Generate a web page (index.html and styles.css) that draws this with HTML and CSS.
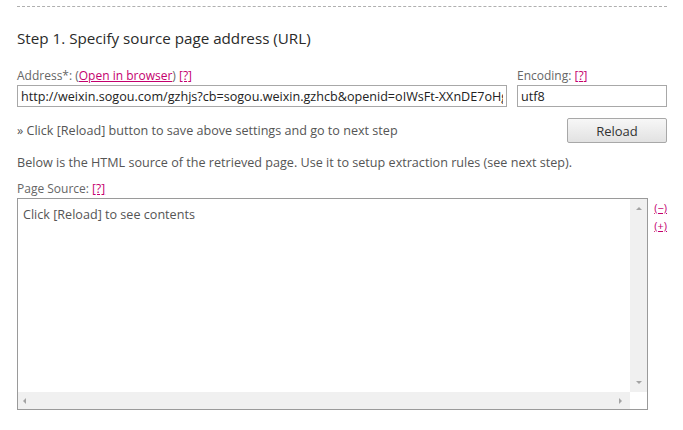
FILE: index.html
```html
<!DOCTYPE html>
<html>
<head>
<meta charset="utf-8">
<link rel="stylesheet" href="styles.css">
</head>
<body>
<div class="page">
  <div class="divider"></div>
  <h2 class="step-title">Step 1. Specify source page address (URL)</h2>
  <div class="url-row">
    <div class="field">
      <div class="label">Address*: (<a href="#">Open in browser</a>) <a href="#">[?]</a></div>
      <input class="text-input" type="text" value="http://weixin.sogou.com/gzhjs?cb=sogou.weixin.gzhcb&amp;openid=oIWsFt-XXnDE7oHgqY0wU2sCsK2k">
    </div>
    <div class="field">
      <div class="label">Encoding: <a href="#">[?]</a></div>
      <input class="text-input" type="text" value="utf8">
    </div>
  </div>
  <div class="reload-row">
    <span class="hint">» Click [Reload] button to save above settings and go to next step</span>
    <button class="btn">Reload</button>
  </div>
  <p class="info">Below is the HTML source of the retrieved page. Use it to setup extraction rules (see next step).</p>
  <div class="label src-label">Page Source: <a href="#">[?]</a></div>
  <div class="source-row">
    <div class="source-box">
      <div class="source-main">
        <div class="source-text">Click [Reload] to see contents</div>
        <div class="vscroll">
          <span class="arrow up"></span>
          <span class="arrow down"></span>
        </div>
      </div>
      <div class="hscroll-row">
        <div class="hscroll">
          <span class="arrow left"></span>
          <span class="arrow right"></span>
        </div>
        <div class="corner"></div>
      </div>
    </div>
    <div class="resize-links">
      <a href="#">(&minus;)</a>
      <a href="#">(+)</a>
    </div>
  </div>
</div>
</body>
</html>
```

FILE: styles.css
```css
html, body {
  margin: 0;
  padding: 0;
  background: #fff;
}
body {
  font-family: "Open Sans", "Noto Sans", sans-serif;
  font-size: 12.6px;
  color: #555;
}
.page {
  padding: 6px 16px 0 17px;
}
.divider {
  border-top: 1px dashed #b0b0b0;
}
.step-title {
  margin: 21px 0 0;
  font-size: 15.2px;
  line-height: 20px;
  font-weight: normal;
  color: #2a2a2a;
}
a {
  color: #c4006e;
  text-decoration: underline;
}
.url-row {
  display: grid;
  grid-template-columns: 1fr 150px;
  column-gap: 10px;
  margin-top: 20px;
}
.label {
  font-size: 12px;
  line-height: 16px;
  height: 16px;
  color: #666;
}
.text-input {
  display: block;
  box-sizing: border-box;
  width: 100%;
  height: 22px;
  margin-top: 1px;
  border: 1px solid #a8a8a8;
  padding: 0 3px;
  font-family: "Open Sans", "Noto Sans", sans-serif;
  font-size: 12.6px;
  color: #222;
  outline: none;
}
.reload-row {
  display: flex;
  justify-content: space-between;
  align-items: center;
  margin-top: 11px;
}
.hint {
  color: #555;
}
.btn {
  width: 100px;
  height: 25px;
  border: 1px solid #a8a8a8;
  border-radius: 2px;
  background: linear-gradient(#f7f7f7, #e2e2e2);
  font-family: "Open Sans", "Noto Sans", sans-serif;
  font-size: 13px;
  color: #333;
  padding: 0;
}
.info {
  margin: 11px 0 0;
  line-height: 17px;
}
.src-label {
  margin-top: 10px;
}
.source-row {
  display: flex;
  align-items: flex-start;
  margin-top: 1px;
}
.source-box {
  width: 633px;
  height: 212px;
  box-sizing: border-box;
  border: 1px solid #9a9a9a;
  display: flex;
  flex-direction: column;
}
.source-main {
  flex: 1;
  display: flex;
}
.source-text {
  flex: 1;
  padding: 7px 5px;
  line-height: 18px;
  color: #555;
}
.vscroll {
  width: 17px;
  background: #f0f0f0;
  display: flex;
  flex-direction: column;
  justify-content: space-between;
  align-items: center;
  padding: 8px 0 8px;
}
.hscroll-row {
  display: flex;
  height: 17px;
}
.hscroll {
  flex: 1;
  background: #f0f0f0;
  display: flex;
  justify-content: space-between;
  align-items: center;
  padding: 0 8px 0 5px;
}
.corner {
  width: 17px;
  background: #fff;
}
.arrow {
  width: 0;
  height: 0;
  display: block;
}
.arrow.up {
  border-left: 3px solid transparent;
  border-right: 3px solid transparent;
  border-bottom: 3px solid #a3a3a3;
}
.arrow.down {
  border-left: 3px solid transparent;
  border-right: 3px solid transparent;
  border-top: 3px solid #a3a3a3;
}
.arrow.left {
  border-top: 3px solid transparent;
  border-bottom: 3px solid transparent;
  border-right: 3px solid #a3a3a3;
}
.arrow.right {
  border-top: 3px solid transparent;
  border-bottom: 3px solid transparent;
  border-left: 3px solid #a3a3a3;
}
.resize-links {
  display: flex;
  flex-direction: column;
  margin-left: 6px;
  margin-top: 1px;
  font-size: 11px;
  line-height: 18px;
}
```
